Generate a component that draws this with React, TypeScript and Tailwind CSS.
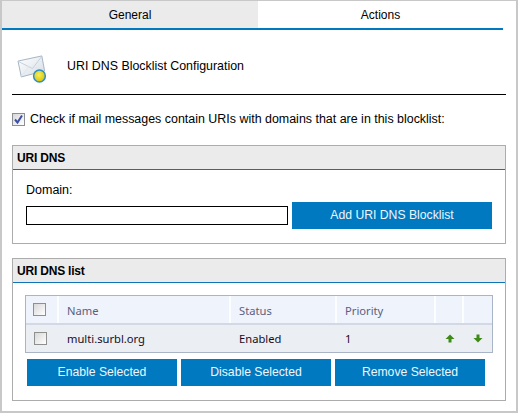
import React from 'react'

// Small envelope with the yellow status dot
function MailIcon() {
  return (
    <svg width="30" height="28" viewBox="0 0 32 30" className="mt-[5px] shrink-0">
      <defs>
        <linearGradient id="env" x1="0" y1="0" x2="1" y2="1">
          <stop offset="0" stopColor="#ffffff" />
          <stop offset="1" stopColor="#d5dde6" />
        </linearGradient>
        <radialGradient id="dot" cx="0.45" cy="0.4" r="0.6">
          <stop offset="0" stopColor="#f6ee60" />
          <stop offset="1" stopColor="#d8c400" />
        </radialGradient>
      </defs>
      <path d="M1 6.5 L26.5 1 L29.5 17 L4.5 23.5 Z" fill="url(#env)" stroke="#9fb0bf" strokeWidth="1" />
      <path d="M1.5 7 L16.5 14.5 L26.5 1.5" fill="none" stroke="#c3ced8" strokeWidth="1" />
      <path d="M4.5 23 L13 12 M29 16.5 L18 13" fill="none" stroke="#dfe5ea" strokeWidth="1" />
      <circle cx="24" cy="22.5" r="6.3" fill="url(#dot)" stroke="#2f8fc4" strokeWidth="1.6" />
    </svg>
  )
}

function Check({ checked = false }: { checked?: boolean }) {
  return (
    <span className="flex h-[13px] w-[13px] items-center justify-center border border-[#8e8f8f] bg-gradient-to-br from-[#d8d8d8] to-white">
      {checked && (
        <svg width="11" height="11" viewBox="0 0 11 11">
          <path d="M2 5.5 L4.5 8.5 L9 1.5" fill="none" stroke="#3c4fa8" strokeWidth="2" />
        </svg>
      )}
    </span>
  )
}

function ActionButton({ label, className }: { label: string; className: string }) {
  return (
    <button className={`flex h-[27px] items-center justify-center bg-[#0079c1] text-[12.2px] text-[#eef6fb] ${className}`}>
      {label}
    </button>
  )
}

function Arrow({ down = false }: { down?: boolean }) {
  return (
    <svg width="10" height="9" viewBox="0 0 10 9" className={down ? 'rotate-180' : ''}>
      <path d="M5 0.5 L9.5 5 L6.5 5 L6.5 8.5 L3.5 8.5 L3.5 5 L0.5 5 Z" fill="#3f8a16" />
    </svg>
  )
}

export default function App() {
  const headCell = 'flex items-center border-r-2 border-white/80'

  return (
    <div
      className="flex h-[413px] w-[518px] flex-col border-2 border-t border-[#c8c8c8] bg-white text-[12.4px] text-black"
      style={{ fontFamily: '"Liberation Sans", Arial, sans-serif' }}
    >
      {/* Tabs */}
      <div className="mr-[13px] flex h-[29px] shrink-0 border-b-2 border-[#0079c1] text-[12px]">
        <div className="flex w-[256px] items-center justify-center bg-[#ebebeb]">General</div>
        <div className="flex flex-1 items-center justify-center">Actions</div>
      </div>

      {/* Title */}
      <div className="mx-[10px] flex h-[65px] shrink-0 items-center gap-[20px] border-b border-black pl-[5px] pt-[9px]">
        <MailIcon />
        <span>URI DNS Blocklist Configuration</span>
      </div>

      <label className="mx-[10px] mt-[18px] flex h-[13px] shrink-0 items-center gap-[5px]">
        <Check checked />
        <span className="text-[12.44px]">Check if mail messages contain URIs with domains that are in this blocklist:</span>
      </label>

      {/* URI DNS */}
      <section className="mx-[10px] mt-[19px] h-[99px] w-[494px] shrink-0 border border-[#acacac]">
        <h2 className="flex h-[24px] items-center border-b border-[#0f74b5] bg-[#ebebeb] pl-[4px] text-[12px] font-bold tracking-[-0.2px]">
          URI DNS
        </h2>
        <div className="pl-[13px] pt-[11px]">
          <div className="h-[21px] text-[12.5px]">Domain:</div>
          <div className="flex items-center gap-[4px]">
            <input className="h-[19px] w-[262px] border border-black bg-white outline-none" />
            <ActionButton label="Add URI DNS Blocklist" className="w-[200px]" />
          </div>
        </div>
      </section>

      {/* URI DNS list */}
      <section className="mx-[10px] mt-[14px] h-[143px] w-[494px] shrink-0 border border-[#acacac]">
        <h2 className="flex h-[24px] items-center border-b border-[#0f74b5] bg-[#ebebeb] pl-[4px] text-[12px] font-bold tracking-[-0.2px]">
          URI DNS list
        </h2>
        <div className="px-[12px] pt-[12px]">
          <div
            className="w-[468px] border border-[#a9b5c6] text-[11.2px]"
            style={{ fontFamily: '"Noto Sans", "Open Sans", sans-serif' }}
          >
            <div className="flex h-[29px] border-b-2 border-[#d3d9e4] bg-[#eff3fb] text-[#5a5f80]">
              <div className={`${headCell} w-[33px] justify-center pr-[4px]`}>
                <Check />
              </div>
              <div className={`${headCell} w-[172px] pl-[8px] pt-[3px]`}>Name</div>
              <div className={`${headCell} w-[106px] pl-[8px] pt-[3px]`}>Status</div>
              <div className={`${headCell} w-[99px] pl-[8px] pt-[3px]`}>Priority</div>
              <div className={`${headCell} w-[28px]`} />
              <div className="flex-1" />
            </div>
            <div className="flex h-[27px] items-center bg-[#ebeef3] text-[#160c26]">
              <div className="flex w-[33px] justify-center pr-[4px]">
                <Check />
              </div>
              <div className="w-[172px] pl-[8px] pt-[2px]">multi.surbl.org</div>
              <div className="w-[106px] pl-[8px] pt-[2px]">Enabled</div>
              <div className="w-[99px] pl-[8px] pt-[2px]">1</div>
              <div className="flex w-[28px] justify-center">
                <Arrow />
              </div>
              <div className="flex flex-1 justify-center">
                <Arrow down />
              </div>
            </div>
          </div>
          <div className="ml-[2px] mt-[6px] flex gap-[4px]">
            <ActionButton label="Enable Selected" className="w-[150px]" />
            <ActionButton label="Disable Selected" className="w-[150px]" />
            <ActionButton label="Remove Selected" className="w-[150px]" />
          </div>
        </div>
      </section>
    </div>
  )
}
